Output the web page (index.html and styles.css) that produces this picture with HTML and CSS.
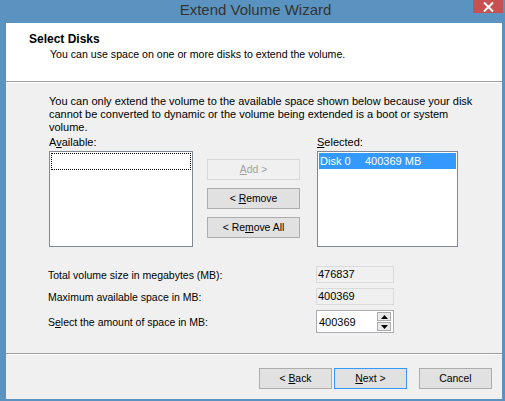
FILE: index.html
```
<!DOCTYPE html>
<html>
<head>
<meta charset="utf-8">
<link rel="stylesheet" href="styles.css">
</head>
<body>
<div class="window">
  <div class="titlebar">
    <span class="spacer"></span>
    <span class="title">Extend Volume Wizard</span>
    <span class="close-wrap"><span class="close"><svg width="11" height="10" viewBox="0 0 11 10"><path d="M1 0.5 L10 9.5 M10 0.5 L1 9.5" stroke="#fff" stroke-width="2"/></svg></span></span>
  </div>
  <div class="client">
    <div class="header">
      <div class="h-title">Select Disks</div>
      <div class="h-sub">You can use space on one or more disks to extend the volume.</div>
    </div>
    <div class="body">
      <p class="intro">You can only extend the volume to the available space shown below because your disk<br>cannot be converted to dynamic or the volume being extended is a boot or system<br>volume.</p>
      <div class="picker">
        <div class="col">
          <div class="label">A<u>v</u>ailable:</div>
          <div class="listbox"><div class="focusrow"></div></div>
        </div>
        <div class="mid">
          <button class="btn disabled"><u>A</u>dd &gt;</button>
          <button class="btn">&lt; <u>R</u>emove</button>
          <button class="btn">&lt; Re<u>m</u>ove All</button>
        </div>
        <div class="col">
          <div class="label"><u>S</u>elected:</div>
          <div class="listbox"><div class="selrow"><span class="disk">Disk 0</span><span>400369 MB</span></div></div>
        </div>
      </div>
      <div class="fields">
        <div class="field">
          <span class="flabel">Total volume size in megabytes (MB):</span>
          <span class="ro">476837</span>
        </div>
        <div class="field">
          <span class="flabel">Maximum available space in MB:</span>
          <span class="ro">400369</span>
        </div>
        <div class="field">
          <span class="flabel">S<u>e</u>lect the amount of space in MB:</span>
          <span class="spin"><span class="spinval">400369</span><span class="arrows"><span class="arr"><svg width="7" height="4" viewBox="0 0 7 4"><path d="M3.5 0 L7 4 L0 4Z" fill="#000"/></svg></span><span class="arr"><svg width="7" height="4" viewBox="0 0 7 4"><path d="M0 0 L7 0 L3.5 4Z" fill="#000"/></svg></span></span></span>
        </div>
      </div>
    </div>
    <div class="footer">
      <button class="btn fbtn">&lt; <u>B</u>ack</button>
      <button class="btn fbtn default"><u>N</u>ext &gt;</button>
      <button class="btn fbtn cancel">Cancel</button>
    </div>
  </div>
</div>
</body>
</html>
```
FILE: styles.css
```
html, body {
  margin: 0;
  padding: 0;
  background: #5b93c0;
}
.window {
  width: 505px;
  height: 401px;
  background: #5b93c0;
  display: flex;
  flex-direction: column;
  font-family: "Liberation Sans", Arial, sans-serif;
  font-size: 11px;
  color: #000;
}
.titlebar {
  height: 23px;
  display: grid;
  grid-template-columns: 1fr auto 1fr;
  align-items: start;
}
.title {
  font-size: 15px;
  color: #333;
  line-height: 20px;
  padding-left: 6px;
}
.close-wrap {
  display: flex;
  justify-content: flex-end;
  padding-right: 2px;
}
.close {
  width: 30px;
  height: 13px;
  background: #c75050;
  display: flex;
  align-items: center;
  justify-content: center;
}
.client {
  margin: 0 3px 2px 6px;
  flex: 1;
  display: flex;
  flex-direction: column;
  background: #f0f0f0;
}
.header {
  background: #fff;
  border-bottom: 1px solid #a0a0a0;
  box-sizing: border-box;
  padding: 9px 0 0 23px;
  height: 59px;
  box-shadow: 0 1px 0 #fff;
}
.h-title {
  font-weight: bold;
  font-size: 12px;
  line-height: 15px;
}
.h-sub {
  padding-left: 21px;
  font-size: 10.6px;
  line-height: 14px;
}
.body {
  flex: 1;
  padding: 13px 0 0 43px;
  border-bottom: 1px solid #a0a0a0;
  box-shadow: 0 1px 0 #fff;
}
.intro {
  margin: 0;
  line-height: 13px;
}
.picker {
  display: grid;
  grid-template-columns: 144px 93px 144px;
  column-gap: 14px;
  margin-top: 2px;
}
.picker .col:last-child {
  margin-left: 3px;
}
.label {
  line-height: 13px;
  height: 15px;
}
.listbox {
  height: 96px;
  background: #fff;
  border: 1px solid #828790;
  box-sizing: border-box;
  padding: 1px;
}
.focusrow {
  height: 17px;
  border: 1px dotted #000;
  box-sizing: border-box;
}
.selrow {
  height: 16px;
  background: #3399ff;
  color: #fff;
  display: flex;
  align-items: center;
  padding-left: 1px;
}
.disk {
  width: 45px;
}
.mid {
  display: flex;
  flex-direction: column;
  gap: 8px;
  padding-top: 23px;
}
.btn {
  height: 21px;
  box-sizing: border-box;
  font-family: "Liberation Sans", Arial, sans-serif;
  font-size: 10.4px;
  color: #000;
  background: #e1e1e1;
  border: 1px solid #adadad;
  padding: 0;
  margin: 0;
}
.btn.disabled {
  background: #f0f0f0;
  border-color: #d9d9d9;
  color: #a0a0a0;
}
.fields {
  margin-top: 19px;
  display: flex;
  flex-direction: column;
  gap: 5px;
}
.field {
  display: flex;
  align-items: center;
}
.flabel {
  width: 268px;
  margin-left: -1px;
  font-size: 10.5px;
}
.ro {
  width: 78px;
  height: 17px;
  box-sizing: border-box;
  border: 1px solid #dadada;
  line-height: 15px;
  padding-left: 1px;
}
.spin {
  width: 78px;
  height: 23px;
  box-sizing: border-box;
  border: 1px solid #abadb3;
  background: #fff;
  display: flex;
  align-items: center;
  justify-content: space-between;
  padding: 0 2px 0 2px;
}
.arrows {
  display: flex;
  flex-direction: column;
  gap: 1px;
}
.arr {
  width: 14px;
  height: 9px;
  box-sizing: border-box;
  border: 1px solid #acacac;
  background: #e9e9e9;
  display: flex;
  align-items: center;
  justify-content: center;
}
.footer {
  height: 45px;
  display: flex;
  align-items: flex-start;
  padding: 14px 0 0 253px;
  box-sizing: border-box;
}
.fbtn {
  width: 73px;
  height: 21px;
}
.fbtn.default {
  margin-left: 2px;
  border-color: #3399ff;
}
.fbtn.cancel {
  margin-left: 12px;
}
```
